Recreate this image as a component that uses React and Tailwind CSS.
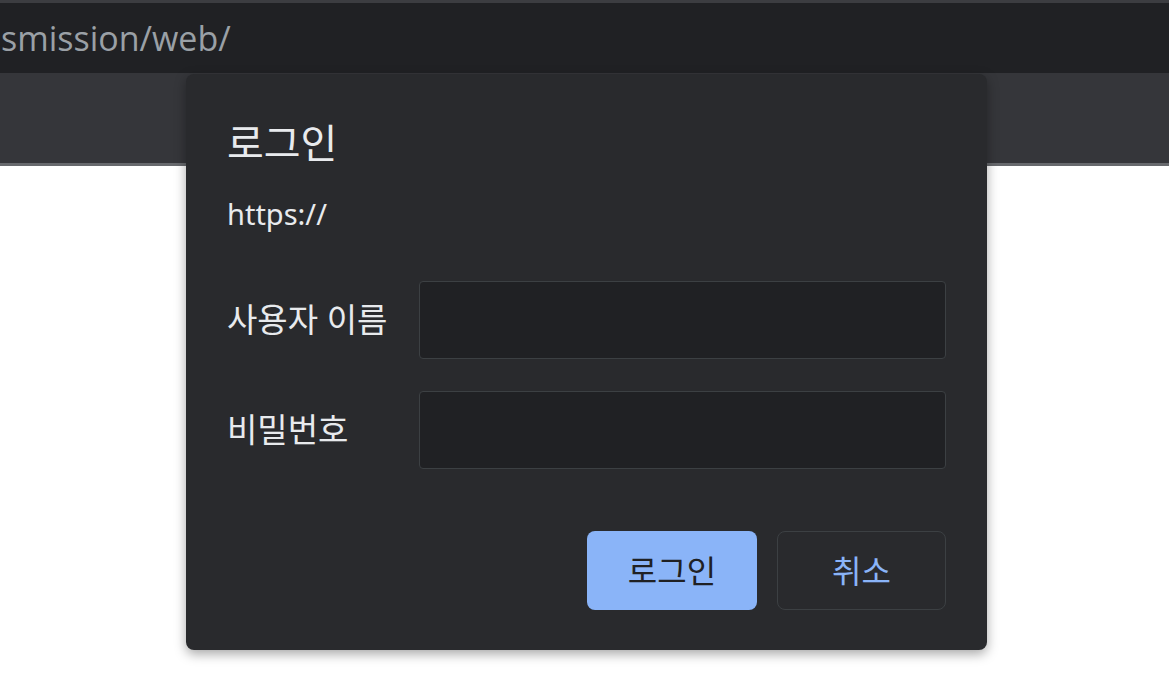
export default function App() {
  const kr = { fontFamily: '"Noto Sans", "Noto Sans CJK KR", sans-serif' };
  return (
    <div className="relative w-[1169px] h-[694px] overflow-hidden bg-white" style={kr}>
      <div className="h-[3px] bg-[#3c3d41]" />
      <div className="h-[70px] bg-[#202124] flex items-center overflow-hidden">
        <span className="text-[34px] text-[#9aa0a6] whitespace-nowrap ml-[1px] leading-none" style={{ fontFamily: '"Open Sans", sans-serif' }}>smission/web/</span>
      </div>
      <div className="h-[93px] bg-[#35363a] border-b-[3px] border-[#67696d]" />

      <div className="absolute left-[186px] top-[74px] w-[801px] h-[576px] bg-[#292a2d] rounded-[8px] shadow-[0_4px_12px_rgba(0,0,0,0.35)] px-[41px] pt-[42px] flex flex-col">
        <div className="text-[40px] leading-[53px] text-[#e8eaed]">로그인</div>
        <div className="mt-[25px] text-[29px] leading-[40px] text-[#e8eaed]">https://</div>
        <div className="mt-[47px] flex items-center">
          <div className="w-[192px] text-[33px] text-[#e8eaed]">사용자 이름</div>
          <div className="flex-1 h-[78px] bg-[#202124] border border-[#3c4043] rounded-[4px]" />
        </div>
        <div className="mt-[32px] flex items-center">
          <div className="w-[192px] text-[33px] text-[#e8eaed]">비밀번호</div>
          <div className="flex-1 h-[78px] bg-[#202124] border border-[#3c4043] rounded-[4px]" />
        </div>
        <div className="mt-auto mb-[40px] flex justify-end gap-[20px]">
          <button className="w-[170px] h-[79px] rounded-[8px] bg-[#8ab4f8] text-[#202124] text-[32px]">로그인</button>
          <button className="w-[169px] h-[79px] rounded-[8px] border border-[#3c4043] text-[#8ab4f8] text-[32px]">취소</button>
        </div>
      </div>
    </div>
  );
}
